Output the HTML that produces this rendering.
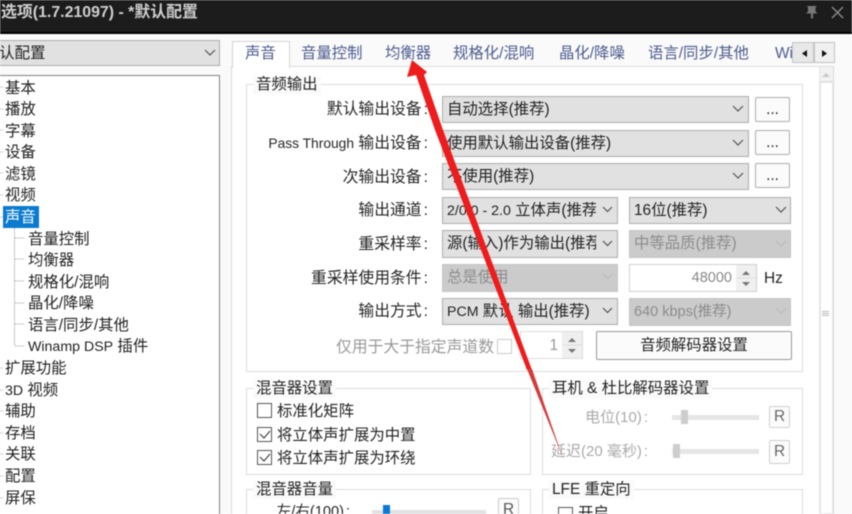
<!DOCTYPE html>
<html lang="zh"><head><meta charset="utf-8">
<style>
html,body{margin:0;padding:0;width:852px;height:514px;overflow:hidden;background:#fafafa}
#r{position:absolute;left:0;top:0;width:852px;height:514px;overflow:hidden;filter:blur(.45px);font:15.4px "Liberation Sans","Noto Sans CJK SC",sans-serif;color:#222}
#r div{position:absolute;box-sizing:border-box;white-space:nowrap}
.t{line-height:20px;height:20px;margin-top:1px}
.c{background:#e1e1e1;border:1px solid #adadad;line-height:26px;padding-left:4px;overflow:hidden}
.d{background:#cbcbcb;border:1px solid #c6c6c6;line-height:26px;padding-left:4px;color:#8c8c8c;overflow:hidden}
.g{border:1px solid #dcdcdc}
.b{background:#fbfbfb;border:1px solid #adadad;border-radius:2px;text-align:center}
.l{text-align:right;line-height:20px;height:20px;color:#262626;margin-top:1px;font-size:15.8px}
.lat{font-size:13.8px}
.k{margin-left:2px}
.tab{color:#4d5b8f;line-height:20px;height:20px;top:43.500px}
.ck{width:15px;height:15px;border:1.5px solid #555;background:#fff}
.tr{line-height:20px;height:20px;color:#222;margin-top:1.500px}
.ti{background:#fafafa;padding:0 3px;line-height:18px;height:18px;margin-top:1px}
.m{font-size:14.2px}
</style></head><body><div id="r">
<div style="left:0;top:0;width:852px;height:32px;background:#1c1c1c"></div>
<div style="left:0;top:32px;width:852px;height:2px;background:#000"></div>
<div style="left:1px;top:2.500px;color:#cfcfcf;line-height:20px;height:20px;font-weight:bold;font-size:15.9px">选项(1.7.21097) - *默认配置</div>
<svg style="position:absolute;left:0;top:0" width="852" height="514">
<path d="M807 6h10l-1.500 1.500v4l2 2h-4.500v5h-2v-5h-5l2-2v-4z" fill="#777"/>
<path d="M832 7l11 11M843 7l-11 11" stroke="#888" stroke-width="1.500" fill="none"/>
</svg>

<!-- left -->
<div class="c" style="left:-2px;top:40px;width:222px;height:26px;padding-left:0;font-size:15.5px">认配置</div>
<div style="left:-2px;top:75px;width:222px;height:445px;background:#fff;border:1px solid #828282"></div>
<div class="tr" style="left:5px;top:77px">基本</div>
<div class="tr" style="left:5px;top:98px">播放</div>
<div class="tr" style="left:5px;top:120px">字幕</div>
<div class="tr" style="left:5px;top:141px">设备</div>
<div class="tr" style="left:5px;top:163px">滤镜</div>
<div class="tr" style="left:5px;top:184px">视频</div>
<div style="left:3px;top:206px;width:36px;height:22px;background:#0a7bd0"></div>
<div class="tr" style="left:5px;top:206px;color:#fff">声音</div>
<div class="tr" style="left:28px;top:228px">音量控制</div>
<div class="tr" style="left:28px;top:249px">均衡器</div>
<div class="tr" style="left:28px;top:271px">规格化/混响</div>
<div class="tr" style="left:28px;top:292px">晶化/降噪</div>
<div class="tr" style="left:28px;top:314px">语言/同步/其他</div>
<div class="tr" style="left:28px;top:335px"><span class="m">Winamp DSP</span> 插件</div>
<div class="tr" style="left:5px;top:357px">扩展功能</div>
<div class="tr" style="left:5px;top:379px"><span class="m">3D</span> 视频</div>
<div class="tr" style="left:5px;top:400px">辅助</div>
<div class="tr" style="left:5px;top:422px">存档</div>
<div class="tr" style="left:5px;top:443px">关联</div>
<div class="tr" style="left:5px;top:465px">配置</div>
<div class="tr" style="left:5px;top:487px">屏保</div>
<svg style="position:absolute;left:0;top:0" width="240" height="514">
<path d="M14.500 228V346M15 238h10M15 259h10M15 281h10M15 303h10M15 324h10M15 346h10" stroke="#999" stroke-dasharray="1 1" fill="none"/>
<path d="M0 87h4M0 109h4M0 130h4M0 152h4M0 173h4M0 195h4M0 217h3M0 368h4M0 390h4M0 411h4M0 433h4M0 454h4M0 476h4M0 498h4" stroke="#aaa" stroke-dasharray="1 1" fill="none"/>
<path d="M205 50l5 5 5-5" stroke="#555" stroke-width="1.200" fill="none"/>
</svg>

<!-- tab page -->
<div style="left:231px;top:66px;width:603px;height:460px;background:#fff;border:1px solid #dcdcdc"></div>
<div style="left:232px;top:41px;width:58px;height:27px;background:#fff;border:1px solid #d4d4d4;border-bottom:0"></div>
<div class="tab" style="left:245px">声音</div>
<div class="tab" style="left:301px">音量控制</div>
<div class="tab" style="left:385px">均衡器</div>
<div class="tab" style="left:453px">规格化/混响</div>
<div class="tab" style="left:559px">晶化/降噪</div>
<div class="tab" style="left:648px">语言/同步/其他</div>
<div class="tab" style="left:775px">Wi</div>
<div style="left:792px;top:42px;width:22px;height:21px;background:#e8e8e8;border:1px solid #c4c4c4"></div>
<div style="left:814px;top:42px;width:21px;height:21px;background:#f0f0f0;border:1px solid #c4c4c4"></div>

<!-- scrollbar -->
<div style="left:819px;top:67px;width:14px;height:450px;background:#f4f4f4;border-left:1px solid #e4e4e4"></div>
<div style="left:820px;top:68px;width:13px;height:14px;background:#f2f2f2;border-bottom:1px solid #ddd"></div>
<div style="left:820px;top:82px;width:13px;height:432px;background:#fff;border:1px solid #e6e6e6"></div>

<!-- audio group -->
<div class="g" style="left:246px;top:84px;width:557px;height:288px"></div>
<div class="ti" style="left:253px;top:75px">音频输出</div>
<div class="l" style="right:424px;top:99px">默认输出设备<span class="k">:</span></div>
<div class="l" style="right:424px;top:133px"><span class="lat">Pass Through</span> 输出设备<span class="k">:</span></div>
<div class="l" style="right:424px;top:167px">次输出设备<span class="k">:</span></div>
<div class="l" style="right:424px;top:200px">输出通道<span class="k">:</span></div>
<div class="l" style="right:424px;top:234px">重采样率<span class="k">:</span></div>
<div class="l" style="right:424px;top:268px">重采样使用条件<span class="k">:</span></div>
<div class="l" style="right:424px;top:301px">输出方式<span class="k">:</span></div>
<div class="l" style="right:358px;top:337px;color:#999">仅用于大于指定声道数</div>
<div style="left:497px;top:339px;width:15px;height:15px;border:1px solid #ccc;background:#fff"></div>

<div class="c" style="left:442px;top:96px;width:307px;height:27px">自动选择(推荐)</div>
<div class="c" style="left:442px;top:130px;width:307px;height:27px">使用默认输出设备(推荐)</div>
<div class="c" style="left:442px;top:163px;width:307px;height:27px">不使用(推荐)</div>
<div class="c" style="left:442px;top:197px;width:176px;height:27px"><span class="m">2/0/0 - 2.0</span> 立体声(推荐)</div>
<div style="left:596px;top:198px;width:21px;height:25px;background:#e1e1e1"></div>
<div class="c" style="left:442px;top:230px;width:176px;height:28px">源(输入)作为输出(推荐)</div>
<div style="left:596px;top:231px;width:21px;height:26px;background:#e1e1e1"></div>
<div class="d" style="left:442px;top:264px;width:176px;height:28px">总是使用</div>
<div class="c" style="left:442px;top:298px;width:176px;height:27px"><span class="m">PCM</span> 默认 输出(推荐)</div>
<div class="c" style="left:629px;top:197px;width:162px;height:27px">16位(推荐)</div>
<div class="d" style="left:629px;top:230px;width:162px;height:28px">中等品质(推荐)</div>
<div class="d" style="left:629px;top:298px;width:162px;height:28px;font-size:14.5px">640 kbps(推荐)</div>
<div class="b" style="left:755px;top:97px;width:35px;height:25px;line-height:24px">...</div>
<div class="b" style="left:755px;top:130px;width:35px;height:25px;line-height:24px">...</div>
<div class="b" style="left:755px;top:163px;width:35px;height:25px;line-height:24px">...</div>
<div style="left:629px;top:264px;width:128px;height:28px;border:1px solid #d0d0d0;background:#fff;line-height:26px;text-align:right;padding-right:24px;color:#888;font-size:14.5px">48000</div>
<div style="left:736px;top:265px;width:20px;height:26px;background:#f0f0f0"></div>
<div class="t" style="left:764px;top:268px">Hz</div>
<div style="left:520px;top:331px;width:63px;height:28px;border:1px solid #dcdcdc;background:#fff;line-height:27px;text-align:right;padding-right:24px;color:#999">1</div>
<div style="left:562px;top:332px;width:20px;height:26px;background:#efefef"></div>
<div class="b" style="left:596px;top:331px;width:196px;height:29px;line-height:28px;border-color:#999">音频解码器设置</div>

<!-- bottom groups -->
<div class="g" style="left:246px;top:388px;width:285px;height:87px"></div>
<div class="ti" style="left:253px;top:379px">混音器设置</div>
<div class="ck" style="left:257px;top:403px"></div>
<div class="t" style="left:277px;top:401px">标准化矩阵</div>
<div class="ck" style="left:257px;top:427px"></div>
<div class="t" style="left:277px;top:425px">将立体声扩展为中置</div>
<div class="ck" style="left:257px;top:450px"></div>
<div class="t" style="left:277px;top:448px">将立体声扩展为环绕</div>

<div class="g" style="left:542px;top:388px;width:261px;height:87px"></div>
<div class="ti" style="left:549px;top:379px">耳机 &amp; 杜比解码器设置</div>
<div class="l" style="right:204px;top:407px;color:#aaa;font-size:15px">电位(10)<span class="k">:</span></div>
<div class="l" style="right:204px;top:441px;color:#aaa;font-size:15px">延迟(20 毫秒)<span class="k">:</span></div>
<div style="left:672px;top:415px;width:87px;height:5px;background:#e6e6e6"></div>
<div style="left:681px;top:410px;width:7px;height:14px;background:#cdcdcd"></div>
<div style="left:672px;top:449px;width:87px;height:5px;background:#e6e6e6"></div>
<div style="left:673px;top:444px;width:7px;height:14px;background:#cdcdcd"></div>
<div class="b" style="left:769px;top:406px;width:21px;height:22px;line-height:20px;color:#666;border-color:#d0d0d0">R</div>
<div class="b" style="left:769px;top:440px;width:21px;height:24px;line-height:22px;color:#666;border-color:#d0d0d0">R</div>

<div class="g" style="left:246px;top:489px;width:285px;height:40px"></div>
<div class="ti" style="left:253px;top:480px">混音器音量</div>
<div class="l" style="right:502px;top:501px;font-size:14.6px">左/右(100)<span class="k">:</span></div>
<div style="left:372px;top:510px;width:114px;height:5px;background:#e2e2e2"></div>
<div style="left:383px;top:505px;width:7px;height:14px;background:#0a78d4"></div>
<div class="b" style="left:498px;top:498px;width:21px;height:24px;line-height:22px;color:#555;border-color:#ccc">R</div>

<div class="g" style="left:542px;top:489px;width:261px;height:40px"></div>
<div class="ti" style="left:549px;top:480px">LFE 重定向</div>
<div class="ck" style="left:558px;top:507px"></div>
<div class="t" style="left:578px;top:503px">开启</div>

<svg style="position:absolute;left:0;top:0" width="852" height="514">
<g stroke="#555" stroke-width="1.200" fill="none">
<path d="M733 106l5 5 5-5M733 140l5 5 5-5M733 173l5 5 5-5M603 207l4.500 4.500 4.500-4.500M603 241l4.500 4.500 4.500-4.500M603 308l4.500 4.500 4.500-4.500M776 207l5 5 5-5"/>
</g>
<g stroke="#bbb" stroke-width="1.200" fill="none">
<path d="M603 274l4.500 4.500 4.500-4.500M776 241l5 5 5-5M776 308l5 5 5-5"/>
</g>
<path d="M807 50l-5 3.500 5 3.500zM822 50l5 3.500-5 3.500z" fill="#111"/>
<path d="M822 77l4-4 4 4z" fill="#c8c8c8"/>
<path d="M822 311.500h7M822 313.500h7M822 315.500h7" stroke="#bbb" fill="none"/>
<path d="M742 275l4-4 4 4zM742 282l4 4 4-4zM568 342l4-4 4 4zM568 349l4 4 4-4z" fill="#777"/>
<path d="M737 278h19M563 345h19" stroke="#ddd" fill="none"/>
<path d="M260 434l4 4 6-7M260 457l4 4 6-7" stroke="#444" stroke-width="1.200" fill="none"/>
<!-- red annotation arrow -->
<path d="M412 60L407 77L416 75L435 130L527 370L532 370L443 130L424 75L427 72Z" fill="#ee1c1c"/>
<path d="M527 369L532 369L563 458Z" fill="#d63a3a"/>
</svg>
</div></body></html>
